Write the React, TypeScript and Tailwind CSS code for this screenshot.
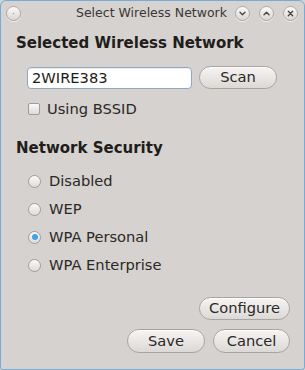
import { useState } from 'react'

const FONT = { fontFamily: '"DejaVu Sans", "Liberation Sans", sans-serif' }

function TitleButton({ kind }: { kind: 'menu' | 'min' | 'max' | 'close' }) {
  return (
    <div className="w-[15px] h-[15px] rounded-full border border-[#aeaaa7] bg-gradient-to-b from-[#fbfbfa] to-[#d9d6d3] flex items-center justify-center shadow-[0_1px_0_rgba(255,255,255,0.6)]">
      <svg width="9" height="9" viewBox="0 0 9 9" fill="none" stroke="#4a4744" strokeWidth={1.4} strokeLinecap="round" strokeLinejoin="round">
        {kind === 'menu' && <circle cx="4.5" cy="4.5" r="0.6" fill="#8a8784" stroke="none" />}
        {kind === 'min' && <path d="M2 3.3 L4.5 5.8 L7 3.3" />}
        {kind === 'max' && <path d="M2 5.7 L4.5 3.2 L7 5.7" />}
        {kind === 'close' && <path d="M2.3 2.3 L6.7 6.7 M6.7 2.3 L2.3 6.7" />}
      </svg>
    </div>
  )
}

function PushButton({ label, className = '' }: { label: string; className?: string }) {
  return (
    <button
      type="button"
      className={`h-[23px] rounded-full border border-[#a8a4a1] bg-gradient-to-b from-[#f6f5f4] to-[#dcd8d5] text-[14.67px] leading-none text-[#2b2826] flex items-center justify-center shadow-[inset_0_1px_0_rgba(255,255,255,0.8)] ${className}`}
    >
      {label}
    </button>
  )
}

function Radio({ checked }: { checked: boolean }) {
  return (
    <span className="w-[13px] h-[13px] rounded-full border border-[#a09c99] bg-gradient-to-b from-[#fafafa] to-[#dedbd8] flex items-center justify-center">
      {checked && <span className="w-[6px] h-[6px] rounded-full bg-[#3fa4e6]" />}
    </span>
  )
}

export default function App() {
  const [security, setSecurity] = useState('WPA Personal')
  const options = ['Disabled', 'WEP', 'WPA Personal', 'WPA Enterprise']

  return (
    <div style={FONT} className="w-[305px] h-[370px] bg-[#d6d2cf]">
      <div className="w-full h-full border border-[#74acd9] rounded-t-[6px] rounded-b-[3px] flex flex-col text-[#2b2826]">

        {/* Title bar */}
        <div className="h-[24px] flex items-center pl-[5px] pr-[6px] pt-[1px]">
          <TitleButton kind="menu" />
          <div className="ml-auto mr-[8px] text-[12.5px] text-[#3a3735] whitespace-nowrap">Select Wireless Network</div>
          <div className="flex gap-[9px]">
            <TitleButton kind="min" />
            <TitleButton kind="max" />
            <TitleButton kind="close" />
          </div>
        </div>

        {/* Body */}
        <div className="flex-1 flex flex-col pl-[15px] pr-[14px]">
          <h2 className="mt-[9px] text-[15px] leading-[18px] font-bold text-[#201d1b]">Selected Wireless Network</h2>

          <div className="mt-[14px] ml-[11px] flex items-center gap-[7px]">
            <div className="w-[165px] h-[22px] rounded-[4px] border border-[#8fa9c2] bg-white flex items-center px-[4px] text-[14.67px] text-[#1e1b19] shadow-[inset_0_1px_1px_rgba(0,0,0,0.08)]">
              2WIRE383
            </div>
            <PushButton label="Scan" className="w-[78px]" />
          </div>

          <label className="mt-[12px] ml-[12px] h-[16px] flex items-center gap-[7px] text-[14.67px]">
            <span className="w-[12px] h-[12px] rounded-[2px] border border-[#a09c99] bg-gradient-to-b from-[#fafafa] to-[#dedbd8]" />
            Using BSSID
          </label>

          <h2 className="mt-[22px] text-[15px] leading-[18px] font-bold text-[#201d1b]">Network Security</h2>

          <div className="mt-[14px] ml-[12px] flex flex-col gap-[8px]">
            {options.map(opt => (
              <div key={opt} onClick={() => setSecurity(opt)} className="h-[20px] flex items-center gap-[8px] text-[14.67px]">
                <Radio checked={security === opt} />
                {opt}
              </div>
            ))}
          </div>

          <div className="mt-[22px] flex justify-end">
            <PushButton label="Configure" className="w-[91px]" />
          </div>

          <div className="mt-[9px] flex justify-end gap-[8px]">
            <PushButton label="Save" className="w-[78px] h-[24px]" />
            <PushButton label="Cancel" className="w-[77px] h-[24px]" />
          </div>
        </div>
      </div>
    </div>
  )
}
